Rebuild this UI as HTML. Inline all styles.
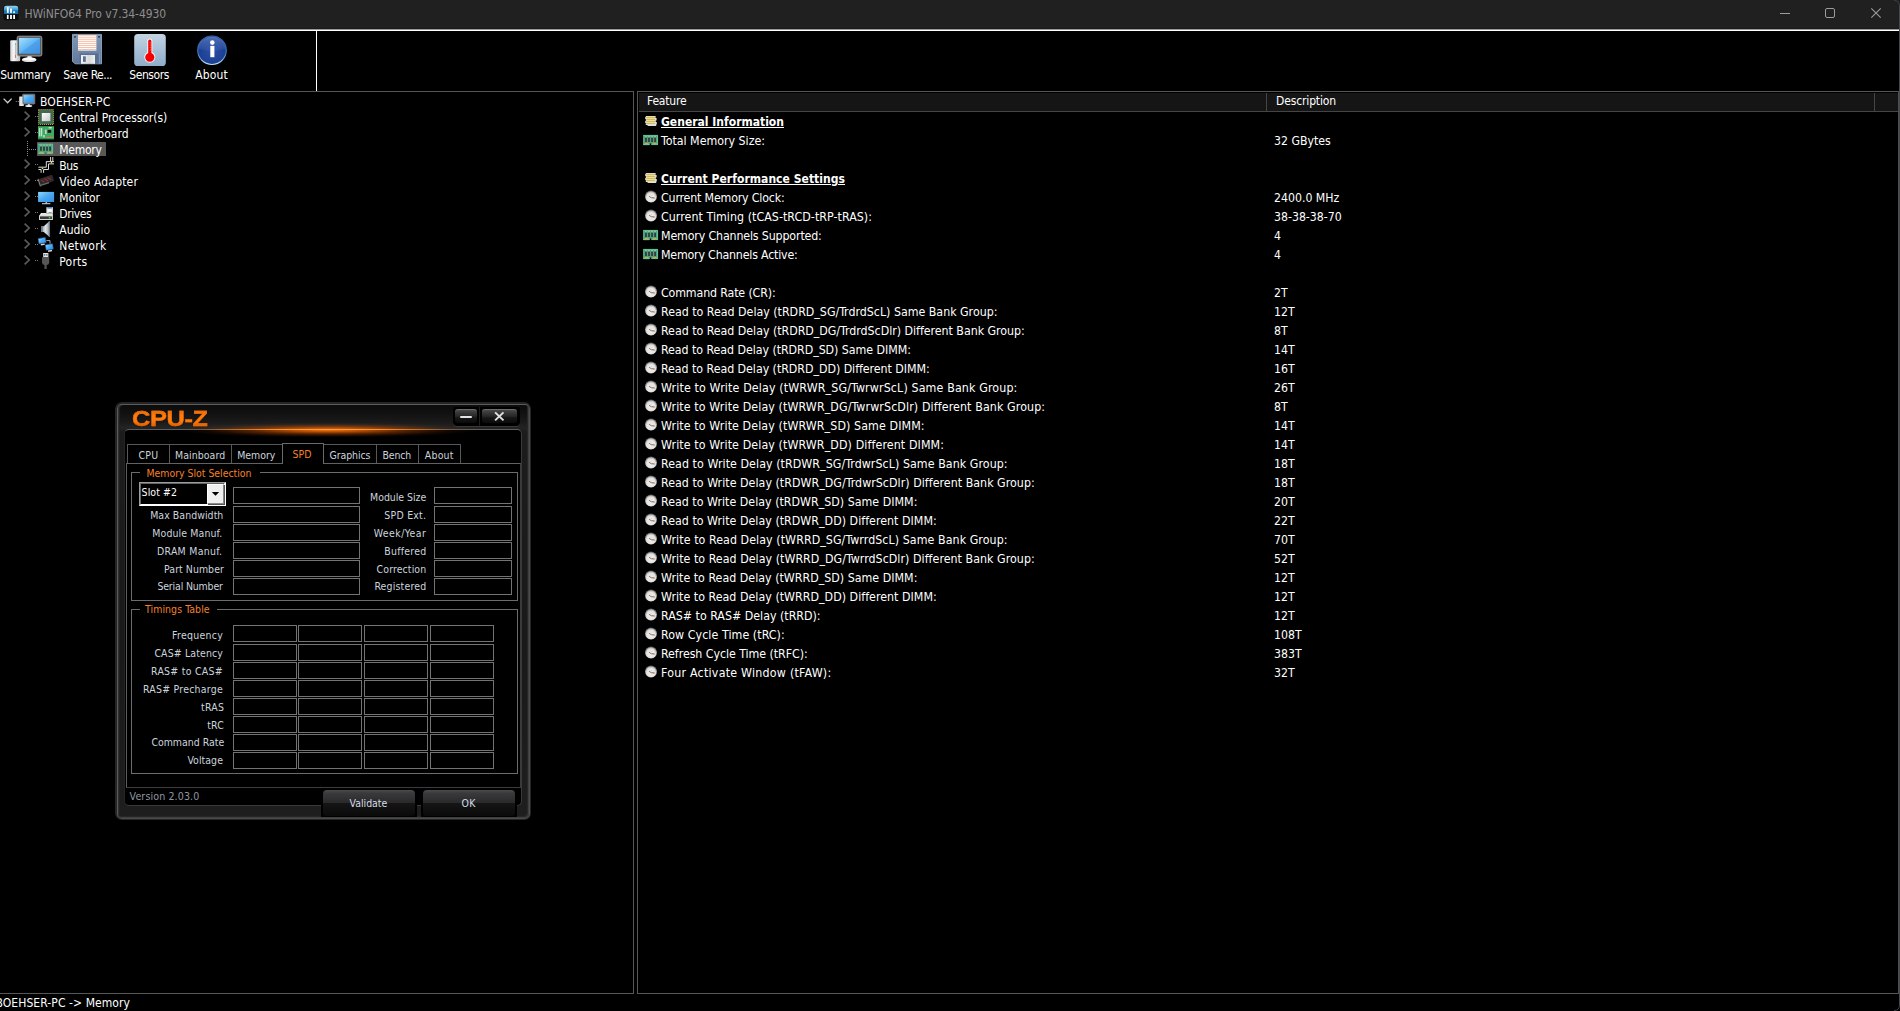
<!DOCTYPE html><html><head><meta charset="utf-8"><title>HWiNFO64 Pro v7.34-4930</title><style>
*{box-sizing:border-box;margin:0;padding:0}
html,body{width:1900px;height:1011px;overflow:hidden;background:#000}
body{position:relative;font-family:"DejaVu Sans Condensed","DejaVu Sans","Liberation Sans",sans-serif;font-size:12px;color:#fff}
.a{position:absolute}
.t{position:absolute;white-space:pre;line-height:16px;height:16px}
svg{position:absolute;overflow:visible}
#title{color:#8e8e8e}
.b{font-weight:bold;text-decoration:underline;text-underline-offset:.6px;text-decoration-thickness:1px}
.cz{font-size:10.45px;color:#ccd4de;line-height:13px;height:13px}
.or{color:#f4802a}
.f{position:absolute;border:1px solid #737373;background:#000}
.g{position:absolute;border:1px solid #6c6c6c}
.tab{position:absolute;top:444px;height:19px;border:1px solid #585858;border-bottom:none}
.btn{position:absolute;border-radius:4px 4px 3px 3px;background:linear-gradient(#4c4c4c 0,#3a3a3c 12%,#2a2a2c 48%,#151516 52%,#0a0a0a 100%)}
</style></head><body>
<div class="a" style="left:0;top:0;width:1900px;height:29px;background:#202020"></div>
<div class="a" style="left:0;top:28px;width:1899px;height:1px;background:#1a1a1a"></div>
<div class="a" style="left:0;top:29px;width:1899px;height:1px;background:#9a9a9a"></div>
<div class="a" style="left:0;top:30px;width:1899px;height:1px;background:#fff"></div>
<div class="t" style="left:24.5px;top:6px;font-size:12px;letter-spacing:-0.099px;color:#8e8e8e;">HWiNFO64 Pro v7.34-4930</div>
<svg style="left:0;top:0" width="1900" height="1011" viewBox="0 0 1900 1011"><defs><linearGradient id="tiB" x1="0" y1="0" x2="0" y2="1"><stop offset="0" stop-color="#9ad4ee"/><stop offset=".55" stop-color="#2f93cf"/><stop offset=".6" stop-color="#1574b6"/><stop offset="1" stop-color="#1470b0"/></linearGradient></defs><rect x="3.5" y="5.5" width="15" height="14.8" rx="2" fill="#0c0c0c"/><path d="M4 8 Q4 5.8 6.2 5.8 H16 Q18.2 5.8 18.2 8 V14 H4 Z" fill="url(#tiB)"/><g fill="#fff"><rect x="6.9" y="7.1" width="1.8" height="5.8"/><rect x="10.1" y="8.5" width="1.8" height="4.4"/><rect x="13.2" y="11.3" width="1.8" height="1.6"/><rect x="6.9" y="14.9" width="1.7" height="4.1"/><rect x="10.1" y="14.9" width="1.8" height="4.1"/><rect x="13.2" y="14.9" width="1.8" height="4.1"/></g></svg>
<svg style="left:0;top:0" width="1900" height="1011" viewBox="0 0 1900 1011"><defs></defs><g fill="none" stroke="#9c9c9c" stroke-width="1"><path d="M1780 13.5 H1790"/><rect x="1825.5" y="8.5" width="9" height="9" rx="1.5"/><path d="M1871.3 8.3 L1880.7 17.7 M1880.7 8.3 L1871.3 17.7" stroke-width="1.1"/></g></svg>
<div class="a" style="left:316px;top:31px;width:1px;height:60px;background:#fff"></div>
<div class="a" style="left:0;top:91px;width:634px;height:1px;background:#565656"></div>
<div class="a" style="left:637px;top:91px;width:1261px;height:1px;background:#565656"></div>
<div class="t" style="left:0.3px;top:67px;font-size:12px;letter-spacing:-0.282px;">Summary</div>
<div class="t" style="left:63.3px;top:67px;font-size:12px;letter-spacing:-0.513px;">Save Re...</div>
<div class="t" style="left:129.2px;top:67px;font-size:12px;letter-spacing:-0.392px;">Sensors</div>
<div class="t" style="left:195.2px;top:67px;font-size:12px;letter-spacing:0.176px;">About</div>
<svg style="left:0;top:0" width="1900" height="1011" viewBox="0 0 1900 1011"><defs><linearGradient id="scr" x1="0" y1="0" x2="1" y2="1"><stop offset="0" stop-color="#a8e2ff"/><stop offset=".5" stop-color="#5fb4f2"/><stop offset=".52" stop-color="#4ea3ea"/><stop offset="1" stop-color="#3f8fe0"/></linearGradient>
<linearGradient id="twr" x1="0" y1="0" x2="1" y2="0"><stop offset="0" stop-color="#cfcfcf"/><stop offset=".35" stop-color="#f8f8f8"/><stop offset="1" stop-color="#bdbdbd"/></linearGradient>
<linearGradient id="flp" x1="0" y1="0" x2="0" y2="1"><stop offset="0" stop-color="#7f96b4"/><stop offset="1" stop-color="#63799c"/></linearGradient>
<linearGradient id="sht" x1="0" y1="0" x2="1" y2="0"><stop offset="0" stop-color="#f4f4f4"/><stop offset=".6" stop-color="#d8d8d8"/><stop offset="1" stop-color="#f0f0f0"/></linearGradient>
<linearGradient id="sen" x1="0" y1="0" x2="0" y2="1"><stop offset="0" stop-color="#c3d4e3"/><stop offset="1" stop-color="#8eacc9"/></linearGradient>
<radialGradient id="abt" cx=".5" cy=".55" r=".6"><stop offset="0" stop-color="#2a4fa6"/><stop offset=".75" stop-color="#1d3f92"/><stop offset="1" stop-color="#2a62b4"/></radialGradient>
<linearGradient id="abg" x1="0" y1="0" x2="0" y2="1"><stop offset="0" stop-color="#8fa6d6" stop-opacity=".85"/><stop offset="1" stop-color="#5f7fc4" stop-opacity=".25"/></linearGradient>
<linearGradient id="abr" x1="0" y1="0" x2="0" y2="1"><stop offset="0" stop-color="#3a6ab8"/><stop offset=".6" stop-color="#3f86cc"/><stop offset="1" stop-color="#bfe4fa"/></linearGradient></defs><rect x="10.2" y="40.2" width="10" height="21" rx="1" fill="url(#twr)"/><rect x="15" y="43" width="0.8" height="14" fill="#b0b8c0"/><rect x="15" y="55" width="0.8" height="3" fill="#e06050"/><rect x="15" y="43" width="0.8" height="2" fill="#60b8e0"/><rect x="17.2" y="36.2" width="24.6" height="19.8" rx="1.6" fill="#5a5a5a" stroke="#a8a8a8" stroke-width="0.9"/><rect x="19" y="37.9" width="21.1" height="15.8" fill="url(#scr)"/><path d="M27.6 56 H31.4 L32.2 59 H26.8 Z" fill="#d8d8d8"/><ellipse cx="29.2" cy="59.6" rx="7.3" ry="2.4" fill="#f4f4f4"/><ellipse cx="29.2" cy="60.4" rx="7" ry="1.6" fill="#dcdcdc"/><ellipse cx="29.2" cy="59.1" rx="6" ry="1.4" fill="#fff"/><path d="M72.5 34.4 H101.5 V63.8 H75 L72.5 61.3 Z" fill="url(#flp)" stroke="#8ea5c3" stroke-width="0.9"/><rect x="78" y="35" width="18.3" height="15.6" fill="#fff"/><rect x="78" y="35.30" width="18.3" height="1" fill="#f8c0aa"/><rect x="78" y="37.25" width="18.3" height="1" fill="#f8c0aa"/><rect x="78" y="39.20" width="18.3" height="1" fill="#f8c0aa"/><rect x="78" y="41.15" width="18.3" height="1" fill="#f8c0aa"/><rect x="78" y="43.10" width="18.3" height="1" fill="#f8c0aa"/><rect x="78" y="45.05" width="18.3" height="1" fill="#f8c0aa"/><rect x="78" y="47.00" width="18.3" height="1" fill="#f8c0aa"/><rect x="78" y="48.95" width="18.3" height="1" fill="#f8c0aa"/><rect x="74.1" y="36" width="1.7" height="1.7" fill="#2e3e56"/><rect x="98.2" y="36" width="1.7" height="1.7" fill="#2e3e56"/><rect x="79.6" y="53.6" width="19" height="10.2" fill="#566f93"/><rect x="99" y="53.6" width="1" height="10" fill="#8197b6"/><rect x="81" y="55" width="14" height="8.8" fill="url(#sht)"/><rect x="83" y="56.3" width="2.8" height="5.6" fill="#5a7398"/><rect x="134.2" y="34" width="31.6" height="32" rx="3.6" fill="url(#sen)"/><path d="M147.2 41 a2.6 2.6 0 0 1 5.2 0 V52.2 a5.6 5.6 0 1 1 -5.2 0 Z" fill="#eef2f6"/><path d="M148.2 41.2 a1.6 1.6 0 0 1 3.2 0 V52.9 a4.6 4.6 0 1 1 -3.2 0 Z" fill="#f50000"/><path d="M150.2 42 V51" stroke="#ff9a9a" stroke-width="0.7" stroke-dasharray="0.8 0.9"/><circle cx="212" cy="50.3" r="14.8" fill="url(#abr)"/><circle cx="212" cy="50" r="13.9" fill="url(#abt)"/><path d="M198.6 48.5 A13.5 13.5 0 0 1 225.4 48.5 Q212 53.5 198.6 48.5 Z" fill="url(#abg)" opacity=".55"/><circle cx="212.3" cy="42.6" r="2.3" fill="#fff"/><rect x="210.3" y="45.9" width="4.1" height="11.3" fill="#fff"/></svg>
<div class="t" style="left:40px;top:94px;font-size:12px;letter-spacing:0.102px;">BOEHSER-PC</div>
<div class="t" style="left:59.3px;top:110px;font-size:12px;letter-spacing:-0.042px;">Central Processor(s)</div>
<div class="t" style="left:59.3px;top:126px;font-size:12px;letter-spacing:-0.003px;">Motherboard</div>
<div class="a" style="left:36.5px;top:141.6px;width:69px;height:14.6px;background:#585858"></div>
<div class="t" style="left:59.3px;top:142px;font-size:12px;letter-spacing:-0.284px;">Memory</div>
<div class="t" style="left:59.3px;top:158px;font-size:12px;letter-spacing:-0.392px;">Bus</div>
<div class="t" style="left:59.3px;top:174px;font-size:12px;letter-spacing:0.172px;">Video Adapter</div>
<div class="t" style="left:59.3px;top:190px;font-size:12px;letter-spacing:-0.050px;">Monitor</div>
<div class="t" style="left:59.3px;top:206px;font-size:12px;letter-spacing:-0.401px;">Drives</div>
<div class="t" style="left:59.3px;top:222px;font-size:12px;letter-spacing:0.002px;">Audio</div>
<div class="t" style="left:59.3px;top:238px;font-size:12px;letter-spacing:0.303px;">Network</div>
<div class="t" style="left:59.3px;top:254px;font-size:12px;letter-spacing:0.203px;">Ports</div>
<svg style="left:0;top:0" width="1900" height="1011" viewBox="0 0 1900 1011"><defs><linearGradient id="mon" x1="0" y1="0" x2="1" y2="1"><stop offset="0" stop-color="#8fd8ff"/><stop offset=".5" stop-color="#4aa8f0"/><stop offset="1" stop-color="#3a8fe0"/></linearGradient>
<linearGradient id="cpuc" x1="0" y1="0" x2="1" y2="1"><stop offset="0" stop-color="#fff"/><stop offset="1" stop-color="#c8c8c8"/></linearGradient>
<linearGradient id="spk" x1="0" y1="0" x2="1" y2="0"><stop offset="0" stop-color="#8a949c"/><stop offset=".5" stop-color="#e0e4e8"/><stop offset="1" stop-color="#9aa0a6"/></linearGradient></defs><path d="M3.6 98.6 l4 4.2 l4 -4.2" fill="none" stroke="#cfcfcf" stroke-width="1.3"/><rect x="15.8" y="101" width="1" height="1" fill="#888"/><rect x="17.8" y="101" width="1" height="1" fill="#888"/><rect x="19.2" y="96.5" width="4.6" height="9.6" rx=".5" fill="#e4e4e4"/><rect x="22.6" y="94.2" width="12.2" height="9.8" rx=".8" fill="#6a6a6a" stroke="#a0a0a0" stroke-width=".6"/><rect x="23.6" y="95.1" width="10.2" height="7.8" fill="url(#mon)"/><rect x="27.8" y="104" width="2" height="1.4" fill="#d0d0d0"/><ellipse cx="28.7" cy="106" rx="3.5" ry="1" fill="#f0f0f0"/><path d="M24.6 111.6 l4.6 4.4 l-4.6 4.4" fill="none" stroke="#5a5a5a" stroke-width="1.7"/><rect x="35" y="116.0" width="1" height="1" fill="#777"/><rect x="37" y="116.0" width="1" height="1" fill="#777"/><path d="M24.6 127.6 l4.6 4.4 l-4.6 4.4" fill="none" stroke="#5a5a5a" stroke-width="1.7"/><rect x="35" y="132.0" width="1" height="1" fill="#777"/><rect x="37" y="132.0" width="1" height="1" fill="#777"/><path d="M24.6 159.6 l4.6 4.4 l-4.6 4.4" fill="none" stroke="#5a5a5a" stroke-width="1.7"/><rect x="35" y="164.0" width="1" height="1" fill="#777"/><rect x="37" y="164.0" width="1" height="1" fill="#777"/><path d="M24.6 175.6 l4.6 4.4 l-4.6 4.4" fill="none" stroke="#5a5a5a" stroke-width="1.7"/><rect x="35" y="180.0" width="1" height="1" fill="#777"/><rect x="37" y="180.0" width="1" height="1" fill="#777"/><path d="M24.6 191.6 l4.6 4.4 l-4.6 4.4" fill="none" stroke="#5a5a5a" stroke-width="1.7"/><rect x="35" y="196.0" width="1" height="1" fill="#777"/><rect x="37" y="196.0" width="1" height="1" fill="#777"/><path d="M24.6 207.6 l4.6 4.4 l-4.6 4.4" fill="none" stroke="#5a5a5a" stroke-width="1.7"/><rect x="35" y="212.0" width="1" height="1" fill="#777"/><rect x="37" y="212.0" width="1" height="1" fill="#777"/><path d="M24.6 223.6 l4.6 4.4 l-4.6 4.4" fill="none" stroke="#5a5a5a" stroke-width="1.7"/><rect x="35" y="228.0" width="1" height="1" fill="#777"/><rect x="37" y="228.0" width="1" height="1" fill="#777"/><path d="M24.6 239.6 l4.6 4.4 l-4.6 4.4" fill="none" stroke="#5a5a5a" stroke-width="1.7"/><rect x="35" y="244.0" width="1" height="1" fill="#777"/><rect x="37" y="244.0" width="1" height="1" fill="#777"/><path d="M24.6 255.6 l4.6 4.4 l-4.6 4.4" fill="none" stroke="#5a5a5a" stroke-width="1.7"/><rect x="35" y="260.0" width="1" height="1" fill="#777"/><rect x="37" y="260.0" width="1" height="1" fill="#777"/><rect x="27" y="141" width="1" height="1" fill="#8a8a8a"/><rect x="27" y="143" width="1" height="1" fill="#8a8a8a"/><rect x="27" y="145" width="1" height="1" fill="#8a8a8a"/><rect x="27" y="147" width="1" height="1" fill="#8a8a8a"/><rect x="27" y="149" width="1" height="1" fill="#8a8a8a"/><rect x="27" y="151" width="1" height="1" fill="#8a8a8a"/><rect x="27" y="153" width="1" height="1" fill="#8a8a8a"/><rect x="27" y="155" width="1" height="1" fill="#8a8a8a"/><rect x="29" y="149" width="1" height="1" fill="#8a8a8a"/><rect x="31" y="149" width="1" height="1" fill="#8a8a8a"/><rect x="33" y="149" width="1" height="1" fill="#8a8a8a"/><rect x="35" y="149" width="1" height="1" fill="#8a8a8a"/><rect x="38.6" y="109.6" width="14.8" height="14.8" fill="#3f6f58" stroke="#e0a838" stroke-width="1" stroke-dasharray="1 1"/><rect x="39.6" y="110.6" width="12.8" height="12.8" fill="#3c6a54"/><rect x="41.8" y="113" width="8.6" height="8.2" fill="url(#cpuc)"/><rect x="38" y="126.2" width="16" height="13" fill="#3dab63"/><rect x="39.3" y="128" width="1" height="8.4" fill="#e8f0e8"/><rect x="41.2" y="128" width="1" height="8.4" fill="#e8f0e8"/><rect x="45" y="129.6" width="1.6" height="4.4" fill="#d8c8d8"/><rect x="47.6" y="130" width="3.6" height="2.8" fill="#181818"/><rect x="48.6" y="127.2" width="3.2" height="1.2" fill="#e8e8e8"/><rect x="46" y="137" width="7" height="1" fill="#e07848"/><rect x="43" y="135" width="2" height="2.6" fill="#8fd8a8"/><rect x="38" y="138.2" width="16" height="1" fill="#2f8a50"/><g transform="translate(38,143.8)"><path d="M0 0 H15 V10 H8.2 V8.6 H6.8 V10 H0 Z" fill="#48a67e"/><path d="M.4 .4 H14.6 V9.6 H8.6 M6.4 9.6 H.4 Z" fill="none" stroke="#6cc8a0" stroke-width=".8"/><rect x="2.10" y="2.8" width="1.7" height="4.2" fill="#3b3238"/><rect x="2.10" y="1" width="1.7" height=".9" fill="#a6c8a0"/><rect x="5.15" y="2.8" width="1.7" height="4.2" fill="#3b3238"/><rect x="5.15" y="1" width="1.7" height=".9" fill="#a6c8a0"/><rect x="8.20" y="2.8" width="1.7" height="4.2" fill="#3b3238"/><rect x="8.20" y="1" width="1.7" height=".9" fill="#a6c8a0"/><rect x="11.25" y="2.8" width="1.7" height="4.2" fill="#3b3238"/><rect x="11.25" y="1" width="1.7" height=".9" fill="#a6c8a0"/><rect x="1.6" y="8.1" width="4" height="1" fill="#f0a030"/><rect x="9.6" y="8.1" width="4" height="1" fill="#f0a030"/></g><g fill="none" stroke="#f4f4f4" stroke-width=".9"><path d="M50.6 157 V161.4 M52.8 157 V161.4"/><path d="M54 161.6 H46.3 V167.2 H38.4"/><path d="M54 163.9 H48.5 V169.5 H43.6 V172.8"/><path d="M38.4 169.5 H41.1 V172.8"/></g><rect x="50.8" y="161.9" width="1.4" height="1.4" fill="#ffe600"/><rect x="41.8" y="167.8" width="1.4" height="1.4" fill="#ffe600"/><g transform="translate(38,173) rotate(-18 8 7)"><rect x="1.2" y="3.8" width="14.3" height="6.6" rx="1" fill="#2c2a2c"/><rect x="1.2" y="9.8" width="9" height="1.3" fill="#6a6a6a"/><path d="M3.4 5.6 l2.4 2.6 M6.8 5.2 l2.8 3 M10.2 5.2 l2.6 2.8" stroke="#b82828" stroke-width=".9"/><rect x=".2" y="3.4" width="1.1" height="8" fill="#8a8a8a"/></g><rect x="38.1" y="191.9" width="16" height="10.1" fill="url(#mon)"/><rect x="45.5" y="202" width="1.6" height="1.4" fill="#a8c4e0"/><rect x="42" y="203.2" width="8.4" height="1" fill="#cfe0f0"/><rect x="46.4" y="207.2" width="6.5" height="6" fill="#e8e8e8"/><rect x="47.4" y="207.2" width="4.6" height="1.3" fill="#3a78d0"/><rect x="47.8" y="209.4" width="3.8" height="2.2" fill="#fff"/><rect x="48.6" y="212" width="3" height="1.2" fill="#99a"/><path d="M41 213 H46.4 V213.2 H52.9 V216 H39 Z" fill="#e6e6e6"/><rect x="39" y="215.6" width="13.9" height="4.4" rx=".6" fill="#d4d4d4"/><rect x="40" y="216.4" width="11.9" height="2.6" fill="#383838"/><rect x="48.8" y="217" width="1.5" height="1.5" fill="#30e040"/><path d="M41.2 226.2 H43.8 L49.6 221 V237 L43.8 232 H41.2 Z" fill="url(#spk)"/><rect x="41.2" y="226.2" width="1.6" height="5.8" fill="#6a7a8a"/><path d="M49.4 221 V237" stroke="#6e767e" stroke-width="1.3"/><g transform="translate(38.6,238) rotate(-10 3.5 3)"><rect x="0" y="0" width="7.2" height="5.2" fill="url(#mon)" stroke="#2a68c0" stroke-width=".5"/><rect x="1.6" y="5.8" width="4" height="1.5" fill="#d8d8d8"/></g><g transform="translate(45.8,244.4) rotate(-10 3.5 3)"><rect x="0" y="0" width="7.2" height="5.2" fill="url(#mon)" stroke="#2a68c0" stroke-width=".5"/><rect x="1.6" y="5.8" width="4" height="1.5" fill="#d8d8d8"/></g><path d="M46.4 240.6 H50 V243.6" fill="none" stroke="#d0d0d0" stroke-width=".8"/><rect x="43.2" y="253" width="5.2" height="4.4" fill="#e4e4e4"/><rect x="44.2" y="254.2" width="1.1" height="1.4" fill="#444"/><rect x="46.3" y="254.2" width="1.1" height="1.4" fill="#444"/><path d="M42 257.2 H49.2 V262.6 Q49.2 265 46.8 265 H44.4 Q42 265 42 262.6 Z" fill="#565656"/><rect x="44.4" y="265" width="2.3" height="4" fill="#505050"/></svg>
<div class="a" style="left:633px;top:91px;width:1px;height:903px;background:#565656"></div>
<div class="a" style="left:637px;top:91px;width:1px;height:903px;background:#565656"></div>
<div class="a" style="left:0;top:993px;width:634px;height:1px;background:#565656"></div>
<div class="a" style="left:637px;top:993px;width:1261px;height:1px;background:#565656"></div>
<div class="a" style="left:1898px;top:91px;width:1px;height:903px;background:#4e4e4e"></div>
<div class="a" style="left:1899px;top:5px;width:1px;height:1001px;background:#45494b"></div>
<svg style="left:1894px;top:0" width="6" height="6" viewBox="0 0 6 6"><path d="M0 .5 Q5.5 .5 5.5 6" fill="none" stroke="#3c4042" stroke-width="1"/></svg>
<svg style="left:1894px;top:1005px" width="6" height="6" viewBox="0 0 6 6"><path d="M5.5 0 Q5.5 5.5 0 5.5" fill="none" stroke="#3c4042" stroke-width="1"/></svg>
<div class="a" style="left:639px;top:93px;width:1259px;height:18px;background:#151515"></div>
<div class="a" style="left:639px;top:111px;width:1259px;height:1px;background:#454545"></div>
<div class="a" style="left:1266px;top:93px;width:1px;height:18px;background:#454545"></div>
<div class="a" style="left:1874px;top:93px;width:1px;height:18px;background:#454545"></div>
<div class="t" style="left:647px;top:92.5px;font-size:12px;letter-spacing:-0.174px;">Feature</div>
<div class="t" style="left:1276px;top:92.5px;font-size:12px;letter-spacing:-0.136px;">Description</div>
<div class="t b" style="left:661px;top:114px;font-size:12px;letter-spacing:0.005px;">General Information</div>
<div class="t" style="left:661px;top:133px;font-size:12.3px;letter-spacing:-0.005px;">Total Memory Size:</div>
<div class="t" style="left:1274px;top:133px;font-size:12.2px;">32 GBytes</div>
<div class="t b" style="left:661px;top:171px;font-size:12px;letter-spacing:0.041px;">Current Performance Settings</div>
<div class="t" style="left:661px;top:190px;font-size:12.3px;letter-spacing:-0.182px;">Current Memory Clock:</div>
<div class="t" style="left:1274px;top:190px;font-size:12.2px;">2400.0 MHz</div>
<div class="t" style="left:661px;top:209px;font-size:12.3px;letter-spacing:0.054px;">Current Timing (tCAS-tRCD-tRP-tRAS):</div>
<div class="t" style="left:1274px;top:209px;font-size:12.2px;">38-38-38-70</div>
<div class="t" style="left:661px;top:228px;font-size:12.3px;letter-spacing:-0.147px;">Memory Channels Supported:</div>
<div class="t" style="left:1274px;top:228px;font-size:12.2px;">4</div>
<div class="t" style="left:661px;top:247px;font-size:12.3px;letter-spacing:-0.197px;">Memory Channels Active:</div>
<div class="t" style="left:1274px;top:247px;font-size:12.2px;">4</div>
<div class="t" style="left:661px;top:285px;font-size:12.3px;letter-spacing:-0.140px;">Command Rate (CR):</div>
<div class="t" style="left:1274px;top:285px;font-size:12.2px;">2T</div>
<div class="t" style="left:661px;top:304px;font-size:12.3px;letter-spacing:-0.004px;">Read to Read Delay (tRDRD_SG/TrdrdScL) Same Bank Group:</div>
<div class="t" style="left:1274px;top:304px;font-size:12.2px;">12T</div>
<div class="t" style="left:661px;top:323px;font-size:12.3px;letter-spacing:-0.025px;">Read to Read Delay (tRDRD_DG/TrdrdScDlr) Different Bank Group:</div>
<div class="t" style="left:1274px;top:323px;font-size:12.2px;">8T</div>
<div class="t" style="left:661px;top:342px;font-size:12.3px;letter-spacing:-0.051px;">Read to Read Delay (tRDRD_SD) Same DIMM:</div>
<div class="t" style="left:1274px;top:342px;font-size:12.2px;">14T</div>
<div class="t" style="left:661px;top:361px;font-size:12.3px;letter-spacing:-0.040px;">Read to Read Delay (tRDRD_DD) Different DIMM:</div>
<div class="t" style="left:1274px;top:361px;font-size:12.2px;">16T</div>
<div class="t" style="left:661px;top:380px;font-size:12.3px;letter-spacing:0.148px;">Write to Write Delay (tWRWR_SG/TwrwrScL) Same Bank Group:</div>
<div class="t" style="left:1274px;top:380px;font-size:12.2px;">26T</div>
<div class="t" style="left:661px;top:399px;font-size:12.3px;letter-spacing:0.116px;">Write to Write Delay (tWRWR_DG/TwrwrScDlr) Different Bank Group:</div>
<div class="t" style="left:1274px;top:399px;font-size:12.2px;">8T</div>
<div class="t" style="left:661px;top:418px;font-size:12.3px;letter-spacing:0.112px;">Write to Write Delay (tWRWR_SD) Same DIMM:</div>
<div class="t" style="left:1274px;top:418px;font-size:12.2px;">14T</div>
<div class="t" style="left:661px;top:437px;font-size:12.3px;letter-spacing:0.114px;">Write to Write Delay (tWRWR_DD) Different DIMM:</div>
<div class="t" style="left:1274px;top:437px;font-size:12.2px;">14T</div>
<div class="t" style="left:661px;top:456px;font-size:12.3px;letter-spacing:0.070px;">Read to Write Delay (tRDWR_SG/TrdwrScL) Same Bank Group:</div>
<div class="t" style="left:1274px;top:456px;font-size:12.2px;">18T</div>
<div class="t" style="left:661px;top:475px;font-size:12.3px;letter-spacing:0.037px;">Read to Write Delay (tRDWR_DG/TrdwrScDlr) Different Bank Group:</div>
<div class="t" style="left:1274px;top:475px;font-size:12.2px;">18T</div>
<div class="t" style="left:661px;top:494px;font-size:12.3px;letter-spacing:0.018px;">Read to Write Delay (tRDWR_SD) Same DIMM:</div>
<div class="t" style="left:1274px;top:494px;font-size:12.2px;">20T</div>
<div class="t" style="left:661px;top:513px;font-size:12.3px;letter-spacing:0.030px;">Read to Write Delay (tRDWR_DD) Different DIMM:</div>
<div class="t" style="left:1274px;top:513px;font-size:12.2px;">22T</div>
<div class="t" style="left:661px;top:532px;font-size:12.3px;letter-spacing:0.077px;">Write to Read Delay (tWRRD_SG/TwrrdScL) Same Bank Group:</div>
<div class="t" style="left:1274px;top:532px;font-size:12.2px;">70T</div>
<div class="t" style="left:661px;top:551px;font-size:12.3px;letter-spacing:0.044px;">Write to Read Delay (tWRRD_DG/TwrrdScDlr) Different Bank Group:</div>
<div class="t" style="left:1274px;top:551px;font-size:12.2px;">52T</div>
<div class="t" style="left:661px;top:570px;font-size:12.3px;letter-spacing:0.018px;">Write to Read Delay (tWRRD_SD) Same DIMM:</div>
<div class="t" style="left:1274px;top:570px;font-size:12.2px;">12T</div>
<div class="t" style="left:661px;top:589px;font-size:12.3px;letter-spacing:0.030px;">Write to Read Delay (tWRRD_DD) Different DIMM:</div>
<div class="t" style="left:1274px;top:589px;font-size:12.2px;">12T</div>
<div class="t" style="left:661px;top:608px;font-size:12.3px;letter-spacing:0.001px;">RAS# to RAS# Delay (tRRD):</div>
<div class="t" style="left:1274px;top:608px;font-size:12.2px;">12T</div>
<div class="t" style="left:661px;top:627px;font-size:12.3px;letter-spacing:0.073px;">Row Cycle Time (tRC):</div>
<div class="t" style="left:1274px;top:627px;font-size:12.2px;">108T</div>
<div class="t" style="left:661px;top:646px;font-size:12.3px;letter-spacing:-0.053px;">Refresh Cycle Time (tRFC):</div>
<div class="t" style="left:1274px;top:646px;font-size:12.2px;">383T</div>
<div class="t" style="left:661px;top:665px;font-size:12.3px;letter-spacing:0.248px;">Four Activate Window (tFAW):</div>
<div class="t" style="left:1274px;top:665px;font-size:12.2px;">32T</div>
<svg style="left:0;top:0" width="1900" height="1011" viewBox="0 0 1900 1011"><defs><radialGradient id="clk" cx=".5" cy=".55" r=".6"><stop offset="0" stop-color="#f2f2f2"/><stop offset=".8" stop-color="#e2e2e2"/><stop offset="1" stop-color="#c4c4c4"/></radialGradient>
<linearGradient id="ckr" x1="0" y1="0" x2="0" y2="1"><stop offset="0" stop-color="#5c5c5c"/><stop offset=".45" stop-color="#a8a8a8"/><stop offset="1" stop-color="#d8d8d8"/></linearGradient></defs><g transform="translate(645.2,116)"><path d="M.6 0 H10.4 V2 H11.4 V4.4 H10.6 V6 H11.6 V8.6 H11 V10 H2.4 V9 H.6 V7 H0 V5 H.6 V3 H0 V1 H.6 Z" fill="#dedede"/><g fill="#dcbc30"><rect x="1" y=".9" width="8.8" height="1.1"/><rect x="1" y="2.9" width="8.8" height="1.1"/><rect x="1" y="4.9" width="8.8" height="1.1"/><rect x="1" y="6.9" width="8.8" height="1.1"/></g></g><g transform="translate(643,135)"><path d="M0 0 H15 V10 H8.2 V8.6 H6.8 V10 H0 Z" fill="#48a67e"/><path d="M.4 .4 H14.6 V9.6 H8.6 M6.4 9.6 H.4 Z" fill="none" stroke="#6cc8a0" stroke-width=".8"/><rect x="2.10" y="2.8" width="1.7" height="4.2" fill="#3b3238"/><rect x="2.10" y="1" width="1.7" height=".9" fill="#a6c8a0"/><rect x="5.15" y="2.8" width="1.7" height="4.2" fill="#3b3238"/><rect x="5.15" y="1" width="1.7" height=".9" fill="#a6c8a0"/><rect x="8.20" y="2.8" width="1.7" height="4.2" fill="#3b3238"/><rect x="8.20" y="1" width="1.7" height=".9" fill="#a6c8a0"/><rect x="11.25" y="2.8" width="1.7" height="4.2" fill="#3b3238"/><rect x="11.25" y="1" width="1.7" height=".9" fill="#a6c8a0"/><rect x="1.6" y="8.1" width="4" height="1" fill="#f0a030"/><rect x="9.6" y="8.1" width="4" height="1" fill="#f0a030"/></g><g transform="translate(645.2,173)"><path d="M.6 0 H10.4 V2 H11.4 V4.4 H10.6 V6 H11.6 V8.6 H11 V10 H2.4 V9 H.6 V7 H0 V5 H.6 V3 H0 V1 H.6 Z" fill="#dedede"/><g fill="#dcbc30"><rect x="1" y=".9" width="8.8" height="1.1"/><rect x="1" y="2.9" width="8.8" height="1.1"/><rect x="1" y="4.9" width="8.8" height="1.1"/><rect x="1" y="6.9" width="8.8" height="1.1"/></g></g><g transform="translate(651,196.5)"><circle cx="0" cy="0" r="5.9" fill="url(#ckr)"/><circle cx="0" cy=".7" r="4.9" fill="url(#clk)"/><path d="M-4.3 -1.9 A4.8 4.8 0 0 1 4.3 -1.9" fill="none" stroke="#dcdcdc" stroke-width=".7"/><path d="M-1.9 -.2 L.2 1.2 L3.7 1.5" fill="none" stroke="#7a4a2c" stroke-width=".85"/><path d="M0 -1.6 V1" stroke="#f0c8b0" stroke-width=".6"/></g><g transform="translate(651,215.5)"><circle cx="0" cy="0" r="5.9" fill="url(#ckr)"/><circle cx="0" cy=".7" r="4.9" fill="url(#clk)"/><path d="M-4.3 -1.9 A4.8 4.8 0 0 1 4.3 -1.9" fill="none" stroke="#dcdcdc" stroke-width=".7"/><path d="M-1.9 -.2 L.2 1.2 L3.7 1.5" fill="none" stroke="#7a4a2c" stroke-width=".85"/><path d="M0 -1.6 V1" stroke="#f0c8b0" stroke-width=".6"/></g><g transform="translate(643,230)"><path d="M0 0 H15 V10 H8.2 V8.6 H6.8 V10 H0 Z" fill="#48a67e"/><path d="M.4 .4 H14.6 V9.6 H8.6 M6.4 9.6 H.4 Z" fill="none" stroke="#6cc8a0" stroke-width=".8"/><rect x="2.10" y="2.8" width="1.7" height="4.2" fill="#3b3238"/><rect x="2.10" y="1" width="1.7" height=".9" fill="#a6c8a0"/><rect x="5.15" y="2.8" width="1.7" height="4.2" fill="#3b3238"/><rect x="5.15" y="1" width="1.7" height=".9" fill="#a6c8a0"/><rect x="8.20" y="2.8" width="1.7" height="4.2" fill="#3b3238"/><rect x="8.20" y="1" width="1.7" height=".9" fill="#a6c8a0"/><rect x="11.25" y="2.8" width="1.7" height="4.2" fill="#3b3238"/><rect x="11.25" y="1" width="1.7" height=".9" fill="#a6c8a0"/><rect x="1.6" y="8.1" width="4" height="1" fill="#f0a030"/><rect x="9.6" y="8.1" width="4" height="1" fill="#f0a030"/></g><g transform="translate(643,249)"><path d="M0 0 H15 V10 H8.2 V8.6 H6.8 V10 H0 Z" fill="#48a67e"/><path d="M.4 .4 H14.6 V9.6 H8.6 M6.4 9.6 H.4 Z" fill="none" stroke="#6cc8a0" stroke-width=".8"/><rect x="2.10" y="2.8" width="1.7" height="4.2" fill="#3b3238"/><rect x="2.10" y="1" width="1.7" height=".9" fill="#a6c8a0"/><rect x="5.15" y="2.8" width="1.7" height="4.2" fill="#3b3238"/><rect x="5.15" y="1" width="1.7" height=".9" fill="#a6c8a0"/><rect x="8.20" y="2.8" width="1.7" height="4.2" fill="#3b3238"/><rect x="8.20" y="1" width="1.7" height=".9" fill="#a6c8a0"/><rect x="11.25" y="2.8" width="1.7" height="4.2" fill="#3b3238"/><rect x="11.25" y="1" width="1.7" height=".9" fill="#a6c8a0"/><rect x="1.6" y="8.1" width="4" height="1" fill="#f0a030"/><rect x="9.6" y="8.1" width="4" height="1" fill="#f0a030"/></g><g transform="translate(651,291.5)"><circle cx="0" cy="0" r="5.9" fill="url(#ckr)"/><circle cx="0" cy=".7" r="4.9" fill="url(#clk)"/><path d="M-4.3 -1.9 A4.8 4.8 0 0 1 4.3 -1.9" fill="none" stroke="#dcdcdc" stroke-width=".7"/><path d="M-1.9 -.2 L.2 1.2 L3.7 1.5" fill="none" stroke="#7a4a2c" stroke-width=".85"/><path d="M0 -1.6 V1" stroke="#f0c8b0" stroke-width=".6"/></g><g transform="translate(651,310.5)"><circle cx="0" cy="0" r="5.9" fill="url(#ckr)"/><circle cx="0" cy=".7" r="4.9" fill="url(#clk)"/><path d="M-4.3 -1.9 A4.8 4.8 0 0 1 4.3 -1.9" fill="none" stroke="#dcdcdc" stroke-width=".7"/><path d="M-1.9 -.2 L.2 1.2 L3.7 1.5" fill="none" stroke="#7a4a2c" stroke-width=".85"/><path d="M0 -1.6 V1" stroke="#f0c8b0" stroke-width=".6"/></g><g transform="translate(651,329.5)"><circle cx="0" cy="0" r="5.9" fill="url(#ckr)"/><circle cx="0" cy=".7" r="4.9" fill="url(#clk)"/><path d="M-4.3 -1.9 A4.8 4.8 0 0 1 4.3 -1.9" fill="none" stroke="#dcdcdc" stroke-width=".7"/><path d="M-1.9 -.2 L.2 1.2 L3.7 1.5" fill="none" stroke="#7a4a2c" stroke-width=".85"/><path d="M0 -1.6 V1" stroke="#f0c8b0" stroke-width=".6"/></g><g transform="translate(651,348.5)"><circle cx="0" cy="0" r="5.9" fill="url(#ckr)"/><circle cx="0" cy=".7" r="4.9" fill="url(#clk)"/><path d="M-4.3 -1.9 A4.8 4.8 0 0 1 4.3 -1.9" fill="none" stroke="#dcdcdc" stroke-width=".7"/><path d="M-1.9 -.2 L.2 1.2 L3.7 1.5" fill="none" stroke="#7a4a2c" stroke-width=".85"/><path d="M0 -1.6 V1" stroke="#f0c8b0" stroke-width=".6"/></g><g transform="translate(651,367.5)"><circle cx="0" cy="0" r="5.9" fill="url(#ckr)"/><circle cx="0" cy=".7" r="4.9" fill="url(#clk)"/><path d="M-4.3 -1.9 A4.8 4.8 0 0 1 4.3 -1.9" fill="none" stroke="#dcdcdc" stroke-width=".7"/><path d="M-1.9 -.2 L.2 1.2 L3.7 1.5" fill="none" stroke="#7a4a2c" stroke-width=".85"/><path d="M0 -1.6 V1" stroke="#f0c8b0" stroke-width=".6"/></g><g transform="translate(651,386.5)"><circle cx="0" cy="0" r="5.9" fill="url(#ckr)"/><circle cx="0" cy=".7" r="4.9" fill="url(#clk)"/><path d="M-4.3 -1.9 A4.8 4.8 0 0 1 4.3 -1.9" fill="none" stroke="#dcdcdc" stroke-width=".7"/><path d="M-1.9 -.2 L.2 1.2 L3.7 1.5" fill="none" stroke="#7a4a2c" stroke-width=".85"/><path d="M0 -1.6 V1" stroke="#f0c8b0" stroke-width=".6"/></g><g transform="translate(651,405.5)"><circle cx="0" cy="0" r="5.9" fill="url(#ckr)"/><circle cx="0" cy=".7" r="4.9" fill="url(#clk)"/><path d="M-4.3 -1.9 A4.8 4.8 0 0 1 4.3 -1.9" fill="none" stroke="#dcdcdc" stroke-width=".7"/><path d="M-1.9 -.2 L.2 1.2 L3.7 1.5" fill="none" stroke="#7a4a2c" stroke-width=".85"/><path d="M0 -1.6 V1" stroke="#f0c8b0" stroke-width=".6"/></g><g transform="translate(651,424.5)"><circle cx="0" cy="0" r="5.9" fill="url(#ckr)"/><circle cx="0" cy=".7" r="4.9" fill="url(#clk)"/><path d="M-4.3 -1.9 A4.8 4.8 0 0 1 4.3 -1.9" fill="none" stroke="#dcdcdc" stroke-width=".7"/><path d="M-1.9 -.2 L.2 1.2 L3.7 1.5" fill="none" stroke="#7a4a2c" stroke-width=".85"/><path d="M0 -1.6 V1" stroke="#f0c8b0" stroke-width=".6"/></g><g transform="translate(651,443.5)"><circle cx="0" cy="0" r="5.9" fill="url(#ckr)"/><circle cx="0" cy=".7" r="4.9" fill="url(#clk)"/><path d="M-4.3 -1.9 A4.8 4.8 0 0 1 4.3 -1.9" fill="none" stroke="#dcdcdc" stroke-width=".7"/><path d="M-1.9 -.2 L.2 1.2 L3.7 1.5" fill="none" stroke="#7a4a2c" stroke-width=".85"/><path d="M0 -1.6 V1" stroke="#f0c8b0" stroke-width=".6"/></g><g transform="translate(651,462.5)"><circle cx="0" cy="0" r="5.9" fill="url(#ckr)"/><circle cx="0" cy=".7" r="4.9" fill="url(#clk)"/><path d="M-4.3 -1.9 A4.8 4.8 0 0 1 4.3 -1.9" fill="none" stroke="#dcdcdc" stroke-width=".7"/><path d="M-1.9 -.2 L.2 1.2 L3.7 1.5" fill="none" stroke="#7a4a2c" stroke-width=".85"/><path d="M0 -1.6 V1" stroke="#f0c8b0" stroke-width=".6"/></g><g transform="translate(651,481.5)"><circle cx="0" cy="0" r="5.9" fill="url(#ckr)"/><circle cx="0" cy=".7" r="4.9" fill="url(#clk)"/><path d="M-4.3 -1.9 A4.8 4.8 0 0 1 4.3 -1.9" fill="none" stroke="#dcdcdc" stroke-width=".7"/><path d="M-1.9 -.2 L.2 1.2 L3.7 1.5" fill="none" stroke="#7a4a2c" stroke-width=".85"/><path d="M0 -1.6 V1" stroke="#f0c8b0" stroke-width=".6"/></g><g transform="translate(651,500.5)"><circle cx="0" cy="0" r="5.9" fill="url(#ckr)"/><circle cx="0" cy=".7" r="4.9" fill="url(#clk)"/><path d="M-4.3 -1.9 A4.8 4.8 0 0 1 4.3 -1.9" fill="none" stroke="#dcdcdc" stroke-width=".7"/><path d="M-1.9 -.2 L.2 1.2 L3.7 1.5" fill="none" stroke="#7a4a2c" stroke-width=".85"/><path d="M0 -1.6 V1" stroke="#f0c8b0" stroke-width=".6"/></g><g transform="translate(651,519.5)"><circle cx="0" cy="0" r="5.9" fill="url(#ckr)"/><circle cx="0" cy=".7" r="4.9" fill="url(#clk)"/><path d="M-4.3 -1.9 A4.8 4.8 0 0 1 4.3 -1.9" fill="none" stroke="#dcdcdc" stroke-width=".7"/><path d="M-1.9 -.2 L.2 1.2 L3.7 1.5" fill="none" stroke="#7a4a2c" stroke-width=".85"/><path d="M0 -1.6 V1" stroke="#f0c8b0" stroke-width=".6"/></g><g transform="translate(651,538.5)"><circle cx="0" cy="0" r="5.9" fill="url(#ckr)"/><circle cx="0" cy=".7" r="4.9" fill="url(#clk)"/><path d="M-4.3 -1.9 A4.8 4.8 0 0 1 4.3 -1.9" fill="none" stroke="#dcdcdc" stroke-width=".7"/><path d="M-1.9 -.2 L.2 1.2 L3.7 1.5" fill="none" stroke="#7a4a2c" stroke-width=".85"/><path d="M0 -1.6 V1" stroke="#f0c8b0" stroke-width=".6"/></g><g transform="translate(651,557.5)"><circle cx="0" cy="0" r="5.9" fill="url(#ckr)"/><circle cx="0" cy=".7" r="4.9" fill="url(#clk)"/><path d="M-4.3 -1.9 A4.8 4.8 0 0 1 4.3 -1.9" fill="none" stroke="#dcdcdc" stroke-width=".7"/><path d="M-1.9 -.2 L.2 1.2 L3.7 1.5" fill="none" stroke="#7a4a2c" stroke-width=".85"/><path d="M0 -1.6 V1" stroke="#f0c8b0" stroke-width=".6"/></g><g transform="translate(651,576.5)"><circle cx="0" cy="0" r="5.9" fill="url(#ckr)"/><circle cx="0" cy=".7" r="4.9" fill="url(#clk)"/><path d="M-4.3 -1.9 A4.8 4.8 0 0 1 4.3 -1.9" fill="none" stroke="#dcdcdc" stroke-width=".7"/><path d="M-1.9 -.2 L.2 1.2 L3.7 1.5" fill="none" stroke="#7a4a2c" stroke-width=".85"/><path d="M0 -1.6 V1" stroke="#f0c8b0" stroke-width=".6"/></g><g transform="translate(651,595.5)"><circle cx="0" cy="0" r="5.9" fill="url(#ckr)"/><circle cx="0" cy=".7" r="4.9" fill="url(#clk)"/><path d="M-4.3 -1.9 A4.8 4.8 0 0 1 4.3 -1.9" fill="none" stroke="#dcdcdc" stroke-width=".7"/><path d="M-1.9 -.2 L.2 1.2 L3.7 1.5" fill="none" stroke="#7a4a2c" stroke-width=".85"/><path d="M0 -1.6 V1" stroke="#f0c8b0" stroke-width=".6"/></g><g transform="translate(651,614.5)"><circle cx="0" cy="0" r="5.9" fill="url(#ckr)"/><circle cx="0" cy=".7" r="4.9" fill="url(#clk)"/><path d="M-4.3 -1.9 A4.8 4.8 0 0 1 4.3 -1.9" fill="none" stroke="#dcdcdc" stroke-width=".7"/><path d="M-1.9 -.2 L.2 1.2 L3.7 1.5" fill="none" stroke="#7a4a2c" stroke-width=".85"/><path d="M0 -1.6 V1" stroke="#f0c8b0" stroke-width=".6"/></g><g transform="translate(651,633.5)"><circle cx="0" cy="0" r="5.9" fill="url(#ckr)"/><circle cx="0" cy=".7" r="4.9" fill="url(#clk)"/><path d="M-4.3 -1.9 A4.8 4.8 0 0 1 4.3 -1.9" fill="none" stroke="#dcdcdc" stroke-width=".7"/><path d="M-1.9 -.2 L.2 1.2 L3.7 1.5" fill="none" stroke="#7a4a2c" stroke-width=".85"/><path d="M0 -1.6 V1" stroke="#f0c8b0" stroke-width=".6"/></g><g transform="translate(651,652.5)"><circle cx="0" cy="0" r="5.9" fill="url(#ckr)"/><circle cx="0" cy=".7" r="4.9" fill="url(#clk)"/><path d="M-4.3 -1.9 A4.8 4.8 0 0 1 4.3 -1.9" fill="none" stroke="#dcdcdc" stroke-width=".7"/><path d="M-1.9 -.2 L.2 1.2 L3.7 1.5" fill="none" stroke="#7a4a2c" stroke-width=".85"/><path d="M0 -1.6 V1" stroke="#f0c8b0" stroke-width=".6"/></g><g transform="translate(651,671.5)"><circle cx="0" cy="0" r="5.9" fill="url(#ckr)"/><circle cx="0" cy=".7" r="4.9" fill="url(#clk)"/><path d="M-4.3 -1.9 A4.8 4.8 0 0 1 4.3 -1.9" fill="none" stroke="#dcdcdc" stroke-width=".7"/><path d="M-1.9 -.2 L.2 1.2 L3.7 1.5" fill="none" stroke="#7a4a2c" stroke-width=".85"/><path d="M0 -1.6 V1" stroke="#f0c8b0" stroke-width=".6"/></g></svg>
<div class="t" style="left:-4.5px;top:995px;font-size:12px;letter-spacing:0.076px;">BOEHSER-PC -&gt; Memory</div>
<div class="a" style="left:115px;top:402px;width:415.6px;height:417.6px;border-radius:7px;background:#262424"></div>
<div class="a" style="left:117px;top:404px;width:413px;height:415px;border-radius:5px;border:1px solid;border-color:#5c5c5c #4c4c4c #4a4a4a #5a5a5a;background:linear-gradient(180deg,#0b0b0b 0,#111 8px,#1a1a1a 17px,#242424 23px,#1c1c1c 27px,#191919 60%,#1e1e1e 100%);box-shadow:inset -1px -1px 0 #3e3e3e,inset -2px -2px 1px #292929,inset 1px 0 0 #303030,inset 2px 0 1px #242424"></div>
<div class="a" style="left:124px;top:429px;width:398px;height:377px;border-radius:5px;background:#000;border:1px solid;border-color:#5e5e5e #3a3a3a #3a3a3a #242424"></div>
<div class="a" style="left:178px;top:423px;width:300px;height:15px;background:radial-gradient(ellipse 50% 50% at 50% 47%,rgba(255,120,20,.95) 0,rgba(235,100,5,.8) 22%,rgba(200,80,0,.42) 52%,rgba(170,65,0,.12) 80%,rgba(150,60,0,0) 100%)"></div>
<div class="a" style="left:200px;top:428.6px;width:256px;height:1.6px;background:linear-gradient(90deg,rgba(255,140,40,0),rgba(255,150,50,.95) 30%,#ffa040 50%,rgba(255,150,50,.95) 70%,rgba(255,140,40,0))"></div>
<div class="a" style="left:131.6px;top:405.5px;height:26px;line-height:26px;font-family:&quot;Liberation Sans&quot;,&quot;DejaVu Sans&quot;,sans-serif;font-weight:bold;font-size:22.6px;letter-spacing:-.35px;white-space:pre;transform-origin:0 50%;transform:scaleX(1.125);color:#f5760c;-webkit-text-stroke:.35px #f5740c;background:linear-gradient(#e86c08 5px,#ff7c10 10px,#ff7a0c 15px,#d65c00 21px);-webkit-background-clip:text;background-clip:text;-webkit-text-fill-color:transparent;filter:drop-shadow(0 0 .7px #000) drop-shadow(0 0 .6px #3a1800)">CPU-Z</div>
<div class="a" style="left:453px;top:407px;width:67px;height:19px;border-radius:2px 2px 4px 4px;background:#000;box-shadow:0 1px 0 #383838"></div>
<div class="a" style="left:478.5px;top:407px;width:1px;height:19px;background:#1f1f1f"></div>
<div class="a" style="left:455px;top:408.6px;width:22px;height:14px;border-radius:3px;border-top:1px solid #6c6c6c;background:linear-gradient(#4a4a4a 0,#3a3a3a 18%,#272727 48%,#161616 60%,#0b0b0b 100%)"></div>
<div class="a" style="left:482px;top:408.6px;width:35px;height:14px;border-radius:3px;border-top:1px solid #6c6c6c;background:linear-gradient(#4a4a4a 0,#3a3a3a 18%,#272727 48%,#161616 60%,#0b0b0b 100%)"></div>
<div class="a" style="left:460px;top:415.5px;width:12px;height:2.4px;border-radius:1px;background:#e4e4e4"></div>
<svg style="left:493px;top:410px" width="13" height="13" viewBox="0 0 13 13"><path d="M2.1 2.4 L10.5 10.4 M10.5 2.4 L2.1 10.4" stroke="#e0e0e0" stroke-width="2"/></svg>
<div class="tab" style="left:127px;width:43px"></div>
<div class="t cz" style="left:138.6px;top:448.8px;font-size:10.45px;letter-spacing:0.197px;">CPU</div>
<div class="tab" style="left:169px;width:63px"></div>
<div class="t cz" style="left:175.1px;top:448.8px;font-size:10.45px;letter-spacing:0.063px;">Mainboard</div>
<div class="tab" style="left:231px;width:52px"></div>
<div class="t cz" style="left:237.3px;top:448.8px;font-size:10.45px;letter-spacing:-0.034px;">Memory</div>
<div class="tab" style="left:323px;width:54px"></div>
<div class="t cz" style="left:329.5px;top:448.8px;font-size:10.45px;letter-spacing:-0.073px;">Graphics</div>
<div class="tab" style="left:376px;width:43px"></div>
<div class="t cz" style="left:382.5px;top:448.8px;font-size:10.45px;letter-spacing:-0.119px;">Bench</div>
<div class="tab" style="left:418px;width:43px"></div>
<div class="t cz" style="left:424.8px;top:448.8px;font-size:10.45px;letter-spacing:0.227px;">About</div>
<div class="a" style="left:126px;top:463px;width:395px;height:325px;border:1px solid;border-color:#626262 #3a3a3a #3c3c3c #5e5e5e"></div>
<div class="a" style="left:282px;top:443px;width:42px;height:21px;border:1px solid #6a6a6a;border-bottom:none;background:#000"></div>
<div class="t cz or" style="left:292.6px;top:448.2px;font-size:10.45px;letter-spacing:-0.020px;">SPD</div>
<div class="g" style="left:131px;top:472px;width:387px;height:129px"></div>
<div class="a" style="left:140px;top:470px;width:120px;height:5px;background:#000"></div>
<div class="t cz or" style="left:146.5px;top:467.2px;font-size:10.45px;letter-spacing:-0.021px;">Memory Slot Selection</div>
<div class="a" style="left:139px;top:482px;width:87px;height:24px;background:#000;border-style:solid;border-width:2px;border-color:#9c9c9c #fff #fff #9c9c9c"></div>
<div class="a" style="left:140px;top:483px;width:84px;height:21px;border-top:1px solid #636363;border-left:1px solid #636363"></div>
<div class="a" style="left:207px;top:484px;width:17px;height:20px;background:#f0f0f0;border-right:1px solid #8a8a8a;border-bottom:1px solid #8a8a8a;border-top:1px solid #fff;border-left:1px solid #fff;box-shadow:1px 1px 0 #555"></div>
<svg style="left:211px;top:491px" width="9" height="6" viewBox="0 0 9 6"><path d="M.8 .9 H8.2 L4.5 4.8 Z" fill="#000"/></svg>
<div class="t cz" style="left:141.6px;top:486.2px;font-size:10.45px;letter-spacing:0.082px;color:#fff;">Slot #2</div>
<div class="f" style="left:233px;top:487px;width:127px;height:17px"></div>
<div class="f" style="left:434px;top:487px;width:78px;height:17px"></div>
<div class="f" style="left:233px;top:506px;width:127px;height:17px"></div>
<div class="f" style="left:434px;top:506px;width:78px;height:17px"></div>
<div class="f" style="left:233px;top:524px;width:127px;height:17px"></div>
<div class="f" style="left:434px;top:524px;width:78px;height:17px"></div>
<div class="f" style="left:233px;top:542px;width:127px;height:17px"></div>
<div class="f" style="left:434px;top:542px;width:78px;height:17px"></div>
<div class="f" style="left:233px;top:560px;width:127px;height:17px"></div>
<div class="f" style="left:434px;top:560px;width:78px;height:17px"></div>
<div class="f" style="left:233px;top:578px;width:127px;height:17px"></div>
<div class="f" style="left:434px;top:578px;width:78px;height:17px"></div>
<div class="t cz" style="left:150.2px;top:509.3px;font-size:10.45px;letter-spacing:0.062px;">Max Bandwidth</div>
<div class="t cz" style="left:152.3px;top:527.2px;font-size:10.45px;letter-spacing:0.121px;">Module Manuf.</div>
<div class="t cz" style="left:157px;top:545.4px;font-size:10.45px;letter-spacing:0.289px;">DRAM Manuf.</div>
<div class="t cz" style="left:164.1px;top:563.3px;font-size:10.45px;letter-spacing:0.054px;">Part Number</div>
<div class="t cz" style="left:157.4px;top:580.2px;font-size:10.45px;letter-spacing:-0.145px;">Serial Number</div>
<div class="t cz" style="left:370.1px;top:491.2px;font-size:10.45px;letter-spacing:-0.020px;">Module Size</div>
<div class="t cz" style="left:384.3px;top:509.4px;font-size:10.45px;letter-spacing:0.250px;">SPD Ext.</div>
<div class="t cz" style="left:373.7px;top:527.4px;font-size:10.45px;letter-spacing:0.447px;">Week/Year</div>
<div class="t cz" style="left:384.3px;top:545.4px;font-size:10.45px;letter-spacing:0.248px;">Buffered</div>
<div class="t cz" style="left:376.6px;top:563.4px;font-size:10.45px;letter-spacing:0.115px;">Correction</div>
<div class="t cz" style="left:374.4px;top:580.0px;font-size:10.45px;letter-spacing:0.176px;">Registered</div>
<div class="g" style="left:131px;top:609px;width:387px;height:165px"></div>
<div class="a" style="left:140px;top:607px;width:77px;height:5px;background:#000"></div>
<div class="t cz or" style="left:145px;top:603.2px;font-size:10.45px;letter-spacing:0.078px;">Timings Table</div>
<div class="t cz" style="left:172.1px;top:628.8px;font-size:10.45px;letter-spacing:0.275px;">Frequency</div>
<div class="f" style="left:233px;top:625px;width:64px;height:17px"></div>
<div class="f" style="left:298px;top:625px;width:64px;height:17px"></div>
<div class="f" style="left:364px;top:625px;width:64px;height:17px"></div>
<div class="f" style="left:430px;top:625px;width:64px;height:17px"></div>
<div class="t cz" style="left:154.4px;top:647.0px;font-size:10.45px;letter-spacing:0.141px;">CAS# Latency</div>
<div class="f" style="left:233px;top:644px;width:64px;height:17px"></div>
<div class="f" style="left:298px;top:644px;width:64px;height:17px"></div>
<div class="f" style="left:364px;top:644px;width:64px;height:17px"></div>
<div class="f" style="left:430px;top:644px;width:64px;height:17px"></div>
<div class="t cz" style="left:151px;top:665.2px;font-size:10.45px;letter-spacing:0.286px;">RAS# to CAS#</div>
<div class="f" style="left:233px;top:662px;width:64px;height:17px"></div>
<div class="f" style="left:298px;top:662px;width:64px;height:17px"></div>
<div class="f" style="left:364px;top:662px;width:64px;height:17px"></div>
<div class="f" style="left:430px;top:662px;width:64px;height:17px"></div>
<div class="t cz" style="left:143px;top:683.4px;font-size:10.45px;letter-spacing:0.249px;">RAS# Precharge</div>
<div class="f" style="left:233px;top:680px;width:64px;height:17px"></div>
<div class="f" style="left:298px;top:680px;width:64px;height:17px"></div>
<div class="f" style="left:364px;top:680px;width:64px;height:17px"></div>
<div class="f" style="left:430px;top:680px;width:64px;height:17px"></div>
<div class="t cz" style="left:201px;top:701.2px;font-size:10.45px;letter-spacing:0.257px;">tRAS</div>
<div class="f" style="left:233px;top:698px;width:64px;height:17px"></div>
<div class="f" style="left:298px;top:698px;width:64px;height:17px"></div>
<div class="f" style="left:364px;top:698px;width:64px;height:17px"></div>
<div class="f" style="left:430px;top:698px;width:64px;height:17px"></div>
<div class="t cz" style="left:207.2px;top:719.4px;font-size:10.45px;letter-spacing:0.250px;">tRC</div>
<div class="f" style="left:233px;top:716px;width:64px;height:17px"></div>
<div class="f" style="left:298px;top:716px;width:64px;height:17px"></div>
<div class="f" style="left:364px;top:716px;width:64px;height:17px"></div>
<div class="f" style="left:430px;top:716px;width:64px;height:17px"></div>
<div class="t cz" style="left:151.4px;top:736.2px;font-size:10.45px;letter-spacing:0.003px;">Command Rate</div>
<div class="f" style="left:233px;top:734px;width:64px;height:17px"></div>
<div class="f" style="left:298px;top:734px;width:64px;height:17px"></div>
<div class="f" style="left:364px;top:734px;width:64px;height:17px"></div>
<div class="f" style="left:430px;top:734px;width:64px;height:17px"></div>
<div class="t cz" style="left:187.4px;top:754.4px;font-size:10.45px;letter-spacing:0.066px;">Voltage</div>
<div class="f" style="left:233px;top:752px;width:64px;height:17px"></div>
<div class="f" style="left:298px;top:752px;width:64px;height:17px"></div>
<div class="f" style="left:364px;top:752px;width:64px;height:17px"></div>
<div class="f" style="left:430px;top:752px;width:64px;height:17px"></div>
<div class="t cz" style="left:129.6px;top:790.4px;font-size:10.6px;letter-spacing:0.107px;color:#8e97a2;">Version 2.03.0</div>
<div class="a" style="left:321px;top:790px;width:96px;height:27px;background:#000"></div>
<div class="a" style="left:421px;top:790px;width:96px;height:27px;background:#000"></div>
<div class="btn" style="left:323px;top:790px;width:92px;height:25.5px"></div>
<div class="btn" style="left:423px;top:790px;width:92px;height:25.5px"></div>
<div class="t cz" style="left:349.6px;top:797.3px;font-size:10.45px;letter-spacing:-0.008px;color:#d6dde6;">Validate</div>
<div class="t cz" style="left:461.6px;top:797.3px;font-size:10.45px;letter-spacing:0.327px;color:#d6dde6;">OK</div>
</body></html>
